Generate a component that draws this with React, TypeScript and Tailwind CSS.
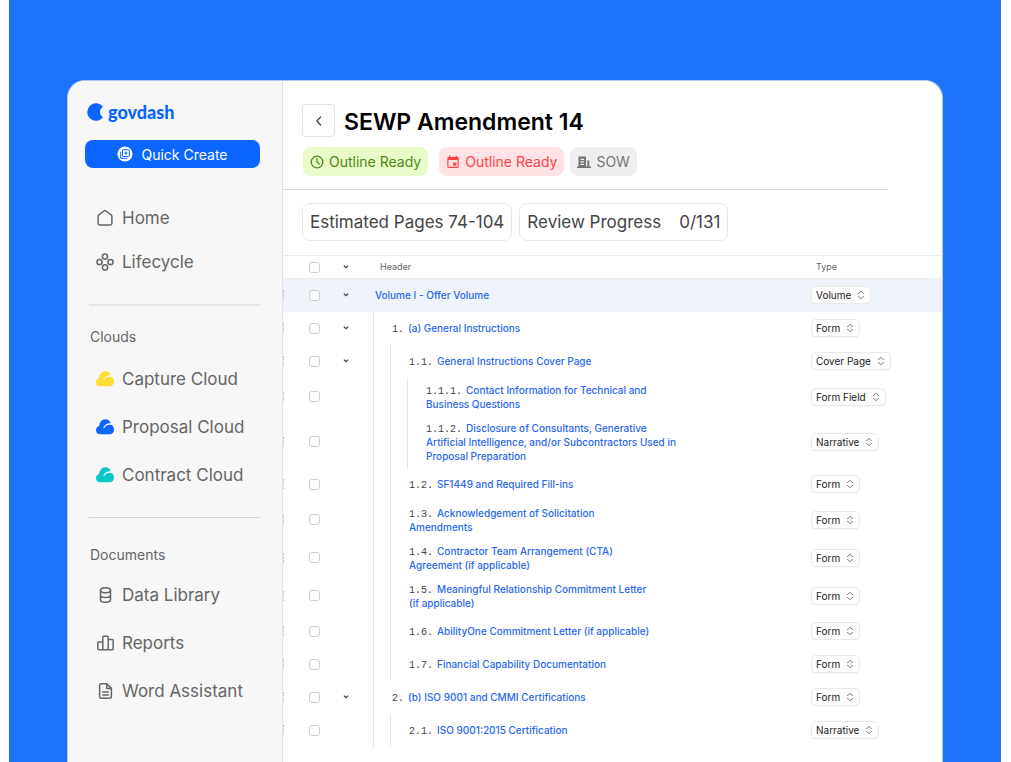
import React from "react";

type Row = { num: string; title: string; level: number; type: string; open?: boolean };

const rows: Row[] = [
  { num: "", title: "Volume I - Offer Volume", level: 0, type: "Volume", open: true },
  { num: "1.", title: "(a) General Instructions", level: 1, type: "Form", open: true },
  { num: "1.1.", title: "General Instructions Cover Page", level: 2, type: "Cover Page", open: true },
  { num: "1.1.1.", title: "Contact Information for Technical and Business Questions", level: 3, type: "Form Field" },
  {
    num: "1.1.2.",
    title: "Disclosure of Consultants, Generative Artificial Intelligence, and/or Subcontractors Used in Proposal Preparation",
    level: 3,
    type: "Narrative",
  },
  { num: "1.2.", title: "SF1449 and Required Fill-ins", level: 2, type: "Form" },
  { num: "1.3.", title: "Acknowledgement of Solicitation Amendments", level: 2, type: "Form" },
  { num: "1.4.", title: "Contractor Team Arrangement (CTA) Agreement (if applicable)", level: 2, type: "Form" },
  { num: "1.5.", title: "Meaningful Relationship Commitment Letter (if applicable)", level: 2, type: "Form" },
  { num: "1.6.", title: "AbilityOne Commitment Letter (if applicable)", level: 2, type: "Form" },
  { num: "1.7.", title: "Financial Capability Documentation", level: 2, type: "Form" },
  { num: "2.", title: "(b) ISO 9001 and CMMI Certifications", level: 1, type: "Form", open: true },
  { num: "2.1.", title: "ISO 9001:2015 Certification", level: 2, type: "Narrative" },
];

const types = ["Volume", "Form", "Cover Page", "Form Field", "Narrative"];

const stroke = {
  fill: "none",
  stroke: "currentColor",
  strokeWidth: 1.5,
  strokeLinecap: "round" as const,
  strokeLinejoin: "round" as const,
};

function HomeIcon() {
  return (
    <svg viewBox="0 0 18 18" className="size-[18px]" {...stroke}>
      <path d="M2.1 7.6c0-.7.3-1.300.8-1.700l5-3.900a1.700 1.700 0 0 1 2.200 0l5 3.900c.5.4.8 1 .8 1.700v6.600c0 1-.7 1.700-1.700 1.700H3.800c-1 0-1.700-.7-1.700-1.700z" />
    </svg>
  );
}

function LifecycleIcon() {
  return (
    <svg viewBox="0 0 18 18" className="size-[18px]" {...stroke} strokeWidth={1.5}>
      <circle cx="9" cy="3.600" r="2.600" />
      <circle cx="9" cy="14.400" r="2.600" />
      <circle cx="3.500" cy="9" r="2.600" />
      <circle cx="14.500" cy="9" r="2.600" />
    </svg>
  );
}

function CloudIcon() {
  return (
    <svg viewBox="0 0 18 18" className="size-[18px]" fill="currentColor">
      <path d="M4.300 16.200A4.300 4.300 0 0 1 0 12c0-2 1.300-3.600 3.100-4.100C3.600 4.100 5.900 1.200 9.100 1.200c2.700 0 4.900 1.500 5.600 4.100C11.300 5 8.500 6.700 7.400 9.600c-.2.6.6.9.9.4 1.500-2.700 3.800-3.600 6.300-3.300 2 .4 3.400 2.300 3.400 4.700 0 2.700-1.900 4.800-4.500 4.800z" />
    </svg>
  );
}

function DataIcon() {
  return (
    <svg viewBox="0 0 18 18" className="size-[18px]" {...stroke}>
      <ellipse cx="9.5" cy="4.300" rx="5" ry="2.500" />
      <path d="M4.500 4.300v9.400c0 1.400 2.200 2.500 5 2.500s5-1.100 5-2.500V4.300M4.500 9c0 1.400 2.200 2.500 5 2.500s5-1.100 5-2.500" />
    </svg>
  );
}

function ReportsIcon() {
  return (
    <svg viewBox="0 0 18 18" className="size-[18px]" {...stroke}>
      <path d="M6.800 15.800H2.800a1 1 0 0 1-1-1V9a1 1 0 0 1 1-1h4zM12.200 15.800H6.800V3.200a1 1 0 0 1 1-1h3.400a1 1 0 0 1 1 1zM12.200 5.600h4a1 1 0 0 1 1 1v8.200a1 1 0 0 1-1 1h-4z" />
    </svg>
  );
}

function WordIcon() {
  return (
    <svg viewBox="0 0 18 18" className="size-[18px]" {...stroke}>
      <path d="M10.700 1.700H5.200a1.600 1.600 0 0 0-1.600 1.600v11.400a1.600 1.600 0 0 0 1.600 1.600h8.600a1.600 1.600 0 0 0 1.600-1.600V6.400zM10.700 1.700v4.700h4.700M6.800 10h5.400M6.800 13h5.400" />
    </svg>
  );
}

function QuickIcon() {
  return (
    <svg viewBox="0 0 16 16" className="size-4">
      <circle cx="8" cy="8" r="7.600" fill="#fff" />
      <g fill="none" stroke="#0a66ff" strokeWidth="1">
        <rect x="5.500" y="3.700" width="6.800" height="6.800" rx=".6" />
        <path d="M3.700 5.600v6.700h6.700M8.900 5.400v3.400M7.200 7.100h3.400" />
      </g>
    </svg>
  );
}

function NavItem({ icon, label }: { icon: React.ReactNode; label: string }) {
  return (
    <a href="#" className="flex h-7 items-center gap-2 pl-7 text-[17px] text-[#666666]">
      {icon}
      <span className="pt-0.5">{label}</span>
    </a>
  );
}

function Caret() {
  return (
    <svg viewBox="0 0 6 4" className="h-1 w-1.5 text-[#444]" {...stroke} strokeWidth={1.2}>
      <path d="M1.200 1 3 2.700 4.800 1" />
    </svg>
  );
}

function Check({ label }: { label: string }) {
  return (
    <input
      type="checkbox"
      aria-label={label}
      className="block size-[11px] appearance-none rounded-[3px] border border-[#cfcfcf] bg-white checked:bg-[#2563eb]"
    />
  );
}

function TypeSelect({ value, label }: { value: string; label: string }) {
  return (
    <span className="relative inline-flex text-[#222]">
      <select
        aria-label={label}
        defaultValue={value}
        className="field-sizing-content h-4 appearance-none rounded-[4px] bg-[#fdfdfd] pr-[19px] pl-1 text-[10px] leading-4 shadow-[0_0_0_1px_#e9e9e9,0_1px_1px_#d4d4d4]"
      >
        {types.map((t) => (
          <option key={t}>{t}</option>
        ))}
      </select>
      <svg
        viewBox="0 0 8 10"
        className="pointer-events-none absolute top-[3px] right-[5px] h-2.5 w-2 text-[#777]"
        {...stroke}
        strokeWidth={1}
      >
        <path d="M1.500 3.700 4 1.200l2.500 2.500M1.500 6.300 4 8.800l2.500-2.500" />
      </svg>
    </span>
  );
}

function OutlineRow({ row }: { row: Row }) {
  const top = row.level === 0;
  return (
    <tr className={top ? "bg-[#eff3fa]" : ""}>
      <td className="h-[33px] p-0">
        <div className="flex items-center">
          <span className="h-2.5 w-0 border-l border-dotted border-[#bbb]" />
          <span className="ml-[25px]">
            <Check label={`Select ${row.title}`} />
          </span>
        </div>
      </td>
      <td className="p-0">
        {row.open && (
          <button aria-label={`Collapse ${row.title}`} className="flex size-4 items-center justify-center">
            <Caret />
          </button>
        )}
      </td>
      <td className="h-[33px] p-0">
        <div className="flex h-full">
          {Array.from({ length: row.level }, (_, i) => (
            <span key={i} className="w-[17px] shrink-0 border-l border-[#e4e4e4]" />
          ))}
          <p
            className={`self-center py-[5px] pl-[2px] text-[10px] leading-[14px] font-medium text-[#2a68ee] ${
              row.level === 3 ? "max-w-[256px]" : "max-w-[248px]"
            }`}
          >
            {row.num && (
              <span className="mr-1 font-['Liberation_Mono',monospace] leading-none font-normal text-[#444]">{row.num}</span>
            )}
            <a href="#">{row.title}</a>
          </p>
        </div>
      </td>
      <td className="p-0">
        <div className="flex">
          <TypeSelect value={row.type} label={`Type of ${row.title}`} />
        </div>
      </td>
    </tr>
  );
}

export default function App() {
  return (
    <div className="h-screen overflow-hidden bg-white pr-2.5 pl-[9px] font-['Inter',sans-serif]">
      <div className="flex h-full bg-[#1e72fb] px-[58px] pt-20">
        <div className="flex min-w-0 flex-1 overflow-hidden rounded-t-[18px] border-x border-t border-[#b5c9ee] bg-white">
          <aside className="w-[215px] shrink-0 border-r border-[#e2e2e2] bg-[#f7f7f7]">
            <div className="mt-[19px] flex h-6 items-center gap-[4px] pl-[18px] text-[#0a66ff]">
              <svg viewBox="0 0 18 18" className="size-[18px]" fill="currentColor">
                <path d="M17.200 3.900A8.800 8.800 0 1 0 17.200 14.100C15.200 13.300 14 11.300 14 9s1.200-4.300 3.200-5.100z" />
              </svg>
              <span className="font-['Lato',sans-serif] text-[18px] leading-6 font-black">govdash</span>
            </div>
            <button className="mt-4 ml-[17px] flex h-7 w-[175px] items-center justify-center gap-2 rounded-lg bg-[#0a66ff] text-[14px] text-white">
              <QuickIcon />
              Quick Create
            </button>
            <nav className="mt-9 flex flex-col gap-4">
              <NavItem icon={<HomeIcon />} label="Home" />
              <NavItem icon={<LifecycleIcon />} label="Lifecycle" />
            </nav>
            <hr className="mt-7 mr-[22px] ml-[21px] border-t-2 border-[#e6e6e6]" />
            <h2 className="mt-[21px] pl-[22px] text-[14px] leading-5 text-[#666666]">Clouds</h2>
            <nav className="mt-[18px] flex flex-col gap-5">
              <NavItem icon={<span className="text-[#ffdd33]"><CloudIcon /></span>} label="Capture Cloud" />
              <NavItem icon={<span className="text-[#0a66ff]"><CloudIcon /></span>} label="Proposal Cloud" />
              <NavItem icon={<span className="text-[#0ac8c8]"><CloudIcon /></span>} label="Contract Cloud" />
            </nav>
            <hr className="mt-7 mr-[22px] ml-[21px] border-t border-[#d6d6d6]" />
            <h2 className="mt-[27px] pl-[22px] text-[14px] leading-5 text-[#666666]">Documents</h2>
            <nav className="mt-4 flex flex-col gap-5">
              <NavItem icon={<DataIcon />} label="Data Library" />
              <NavItem icon={<ReportsIcon />} label="Reports" />
              <NavItem icon={<WordIcon />} label="Word Assistant" />
            </nav>
          </aside>
          <main className="min-w-0 flex-1">
            <header className="mr-[54px] border-b border-[#dedede] pb-[13px] pl-[19px]">
              <div className="flex items-end gap-[9px] pt-[23px]">
                <button aria-label="Back" className="flex size-[33px] items-center justify-center rounded-[4px] border border-[#e3e3e3] text-[#444]">
                  <svg viewBox="0 0 12 12" className="size-3" {...stroke} strokeWidth={1.300}>
                    <path d="M7.600 2 3.800 6l3.800 4" />
                  </svg>
                </button>
                <h1 className="text-[23px] leading-[30px] font-semibold text-black">SEWP Amendment 14</h1>
              </div>
              <div className="mt-2.5 flex pl-px text-[14px]">
                <span className="flex h-[29px] items-center gap-[5px] rounded-lg bg-[#e9fbc9] px-[7px] text-[#4d8a14]">
                  <svg viewBox="0 0 14 14" className="size-3.5" {...stroke} strokeWidth={1.300}>
                    <circle cx="7" cy="7" r="5.800" />
                    <path d="M7 3.500V7l2.300 2" />
                  </svg>
                  Outline Ready
                </span>
                <span className="ml-[11px] flex h-[29px] items-center gap-[5px] rounded-lg bg-[#ffe3e4] px-[7px] text-[#ff4246]">
                  <svg viewBox="0 0 14 14" className="size-3.5" fill="currentColor">
                    <path fillRule="evenodd" d="M3 .8h1.300V2h5.400V.8H11V2h.5c.7 0 1.200.5 1.200 1.200v8.600c0 .7-.5 1.200-1.200 1.200h-9c-.7 0-1.200-.5-1.200-1.200V3.200C1.300 2.500 1.800 2 2.500 2H3zM2.500 4.900v6.900h9V4.900zM7.200 7.600h3.200v3.200H7.200z" />
                  </svg>
                  Outline Ready
                </span>
                <span className="ml-1.5 flex h-[29px] items-center gap-[5px] rounded-lg bg-[#efefef] px-[7px] text-[#757575]">
                  <svg viewBox="0 0 14 14" className="size-3.5" fill="currentColor">
                    <path fillRule="evenodd" d="M1.500 1.500h7.500v10h1.300V5.500h2v6H14V13H0v-1.500h1.500zM3.500 3.800v1.200h3.500V3.800zm0 2.500v1.200h3.500V6.300zm0 2.500V10h3.500V8.800z" />
                  </svg>
                  SOW
                </span>
              </div>
            </header>
            <div className="flex gap-[7px] pt-[13px] pb-3 pl-[19px] text-[17px] text-[#444]">
              <div className="flex h-[38px] items-center rounded-lg border border-[#e8e8e8] px-[7px] pt-0.5">Estimated Pages 74-104</div>
              <div className="flex h-[38px] items-center gap-[18px] rounded-lg border border-[#e8e8e8] px-[7px] pt-0.5">
                <span>Review Progress</span>
                <span>0/131</span>
              </div>
            </div>
            <table className="mt-0.5 w-full table-fixed border-collapse text-left">
              <colgroup>
                <col className="w-[55px]" />
                <col className="w-[35px]" />
                <col />
                <col className="w-[130px]" />
              </colgroup>
              <thead>
                <tr className="border-y border-[#ececec] text-[9px] text-[#666]">
                  <th className="h-[23px] p-0 pl-[26px]">
                    <Check label="Select all" />
                  </th>
                  <th className="p-0">
                    <button aria-label="Collapse all" className="flex size-4 items-center justify-center">
                      <Caret />
                    </button>
                  </th>
                  <th className="p-0 pl-[7px] font-normal">Header</th>
                  <th className="p-0 pl-1 font-normal">Type</th>
                </tr>
              </thead>
              <tbody>
                {rows.map((row) => (
                  <OutlineRow key={row.title} row={row} />
                ))}
              </tbody>
            </table>
          </main>
        </div>
      </div>
    </div>
  );
}
